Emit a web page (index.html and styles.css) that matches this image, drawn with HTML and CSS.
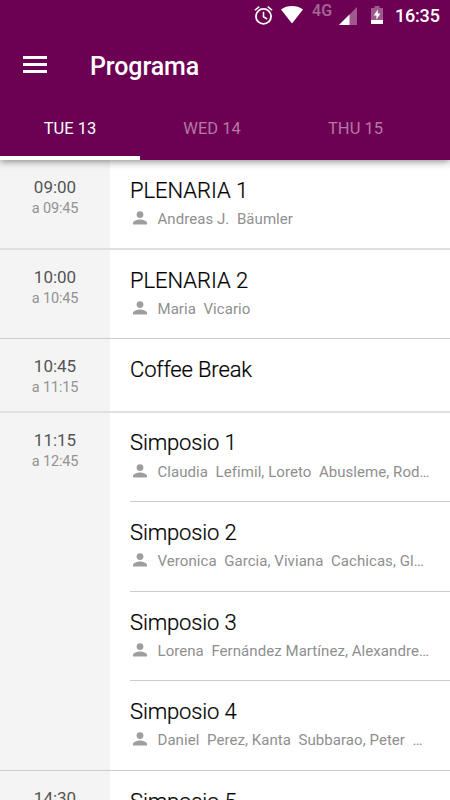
FILE: index.html
```html
<!DOCTYPE html>
<html lang="es">
<head>
<meta charset="utf-8">
<title>Programa</title>
<link rel="stylesheet" href="styles.css">
</head>
<body>
<svg class="defs" aria-hidden="true"><symbol id="person" viewBox="0 0 14 14"><circle cx="7" cy="3.6" r="3.4"/><path d="M0 13.6v-1.7C0 9.6 4.6 8.4 7 8.4s7 1.2 7 3.5v1.7z"/></symbol></svg>
<header class="header">
  <div class="status">
    <svg class="alarm" viewBox="0 0 18 19"><circle cx="9" cy="10.8" r="7.2" fill="none" stroke="currentColor" stroke-width="1.7"/><path d="M.8 5 5 1.5M17.2 5 13 1.5M9 6.3v4.9l3.5 2.2" fill="none" stroke="currentColor" stroke-width="1.5"/></svg>
    <svg class="wifi" viewBox="0 0 22 18"><path d="M0 3.4C3 1.2 7 0 11 0s8 1.2 11 3.4L11 17.4z" fill="currentColor"/></svg>
    <span class="network">4G</span>
    <svg class="signal" viewBox="0 0 18 18"><path d="M0 18 18 0v18z" fill="currentColor" opacity=".35"/><path d="M0 18 10.5 7.5V18z" fill="currentColor"/></svg>
    <svg class="battery" viewBox="0 0 12 18"><path d="M0 2h3.5V0h5v2H12v12H0z" fill="currentColor" opacity=".35"/><path d="M0 14h12v4H0zM6.8 3.4 2.7 9.6h2.7v4.2L9.4 7.6H6.8z" fill="currentColor"/></svg>
    <span class="clock">16:35</span>
  </div>
  <div class="toolbar">
    <svg class="menu" viewBox="0 0 24 18"><path d="M0 0h24v3H0zM0 7h24v3H0zM0 14h24v3H0z" fill="currentColor"/></svg>
    <h1>Programa</h1>
  </div>
  <nav class="tabs">
    <a class="tab active">TUE 13</a><a class="tab wed">WED 14</a><a class="tab thu">THU 15</a>
  </nav>
</header>
<main class="schedule">
  <section class="slot">
    <div class="time"><b>09:00</b><small>a 09:45</small></div>
    <div class="sessions">
      <article><h2 class="upper">PLENARIA 1</h2><p><svg><use href="#person"/></svg><span>Andreas J.&nbsp; Bäumler</span></p></article>
    </div>
  </section>
  <section class="slot thin">
    <div class="time"><b>10:00</b><small>a 10:45</small></div>
    <div class="sessions">
      <article><h2 class="upper">PLENARIA 2</h2><p><svg><use href="#person"/></svg><span>Maria&nbsp; Vicario</span></p></article>
    </div>
  </section>
  <section class="slot">
    <div class="time"><b>10:45</b><small>a 11:15</small></div>
    <div class="sessions">
      <article class="break"><h2>Coffee Break</h2></article>
    </div>
  </section>
  <section class="slot thin group">
    <div class="time"><b>11:15</b><small>a 12:45</small></div>
    <div class="sessions">
      <article><h2>Simposio 1</h2><p><svg><use href="#person"/></svg><span>Claudia&nbsp; Lefimil, Loreto&nbsp; Abusleme, Rod…</span></p></article>
      <article><h2>Simposio 2</h2><p><svg><use href="#person"/></svg><span>Veronica&nbsp; Garcia, Viviana&nbsp; Cachicas, Gl…</span></p></article>
      <article><h2>Simposio 3</h2><p><svg><use href="#person"/></svg><span>Lorena&nbsp; Fernández Martínez, Alexandre…</span></p></article>
      <article><h2>Simposio 4</h2><p><svg><use href="#person"/></svg><span>Daniel&nbsp; Perez, Kanta&nbsp; Subbarao, Peter&nbsp; …</span></p></article>
    </div>
  </section>
  <section class="slot">
    <div class="time"><b>14:30</b></div>
    <div class="sessions">
      <article><h2>Simposio 5</h2></article>
    </div>
  </section>
</main>
</body>
</html>
```

FILE: styles.css
```css
* { box-sizing: border-box; }
body {
  margin: 0;
  width: 450px;
  height: 800px;
  overflow: hidden;
  display: flex;
  flex-direction: column;
  background: #fff;
  font-family: Roboto, "Liberation Sans", sans-serif;
}
svg { display: block; flex: none; }
.defs { position: absolute; width: 0; height: 0; }
.header {
  position: relative;
  z-index: 1;
  flex: none;
  height: 160px;
  background: #6c0052;
  color: #fff;
  box-shadow: 0 2px 7px rgba(0, 0, 0, .42);
}
.status {
  display: flex;
  height: 32px;
  padding-left: 254px;
}
.alarm { width: 19px; height: 20px; margin-top: 5px; }
.wifi { width: 22px; height: 18px; margin: 6px 0 0 8px; }
.network {
  width: 24px;
  margin: 1px 0 0 9px;
  font-size: 16px;
  line-height: 20px;
  font-weight: 500;
  letter-spacing: .2px;
  opacity: .4;
}
.signal { width: 18px; height: 18px; margin: 7px 0 0 3px; }
.battery { width: 12px; height: 18px; margin: 6px 0 0 14px; }
.clock {
  margin: 5px 0 0 12px;
  font-size: 18px;
  line-height: 22px;
  font-weight: 500;
  letter-spacing: -.2px;
  white-space: nowrap;
}
.toolbar {
  display: flex;
  height: 66px;
  padding: 0 23px;
}
.menu { width: 24px; height: 18px; margin-top: 24px; }
h1 {
  margin: 20px 0 0 43px;
  font-size: 25px;
  line-height: 30px;
  font-weight: 500;
  letter-spacing: -.1px;
}
.tabs { display: flex; height: 62px; }
.tab {
  width: 140px;
  height: 62px;
  padding-top: 20px;
  text-align: center;
  font-size: 16.5px;
  line-height: 22px;
  color: #b578a7;
}
.tab.active { color: #fff; border-bottom: 4px solid #fff; }
.tab.wed { width: 144px; }
.tab.thu { width: 143px; }
.schedule { flex: none; }
.slot { display: flex; border-bottom: 2px solid #e0e0e0; }
.slot.thin { border-bottom: 1px solid #ccc; }
.time {
  width: 110px;
  padding-top: 16px;
  background: #f4f4f4;
  text-align: center;
}
.time b, .time small { display: block; }
.time b { font-size: 17px; line-height: 22px; font-weight: 400; color: #555; }
.time small { font-size: 14.5px; line-height: 21px; font-weight: 400; letter-spacing: -.15px; color: #929292; }
.sessions { flex: 1; padding-left: 20px; min-width: 0; }
article { height: 88px; padding-top: 17px; }
.group article:first-child { padding-top: 16px; }
.group article:first-child p { margin-top: 4px; }
article + article { height: 89.7px; border-top: 1px solid #ccc; }
article.break { height: 72px; }
h2 {
  margin: 0;
  font-size: 22px;
  line-height: 28px;
  font-weight: 300;
  letter-spacing: -.15px;
  color: #000;
  -webkit-text-stroke: .2px #000;
}
h2.upper { letter-spacing: -.05px; }
p { display: flex; margin: 3px 0 0; padding-left: 3px; }
p svg { width: 14px; height: 14px; margin-top: 3px; fill: #9e9e9e; }
p span {
  margin-left: 10.5px;
  font-size: 15px;
  line-height: 22px;
  letter-spacing: .06px;
  color: #8f8f8f;
  white-space: nowrap;
}
```
